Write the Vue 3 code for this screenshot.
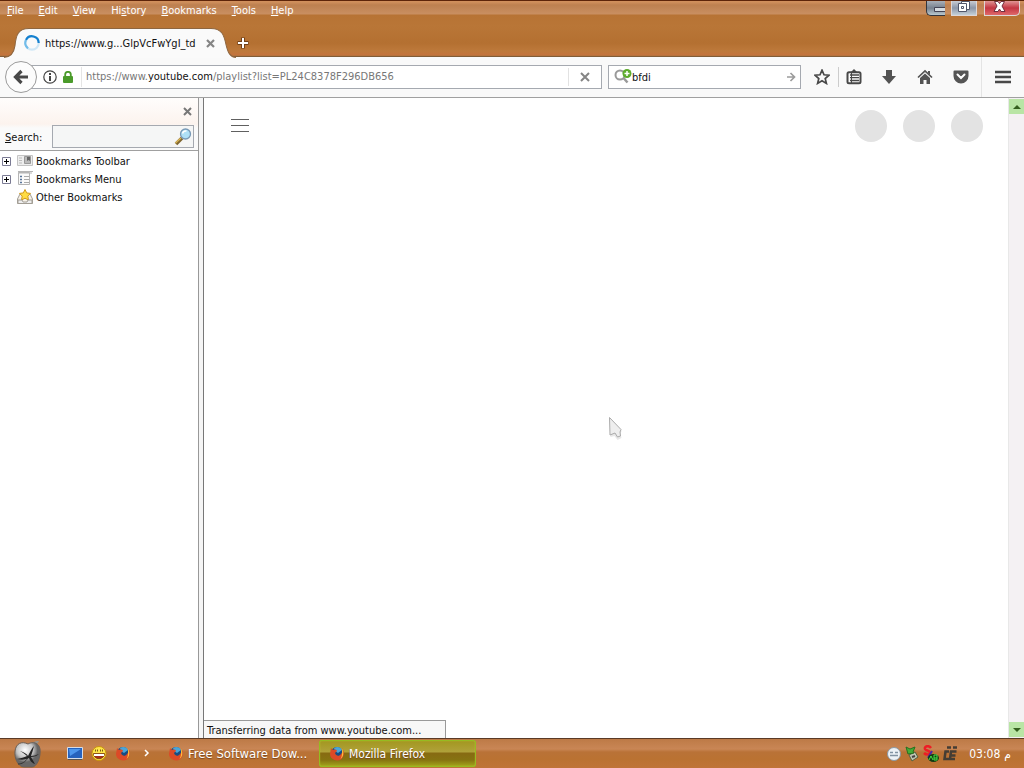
<script setup>
import { ref } from 'vue'

const menus = ['File', 'Edit', 'View', 'History', 'Bookmarks', 'Tools', 'Help']
const menuKey = { File: 0, Edit: 0, View: 0, History: 2, Bookmarks: 0, Tools: 0, Help: 0 }
const query = ref('bfdi')
const filter = ref('')
</script>

<template>
  <div class="desktop">
    <header class="titlebar">
      <nav class="menus">
        <button v-for="m in menus" :key="m" class="menu">{{ m.slice(0, menuKey[m]) }}<u>{{ m[menuKey[m]] }}</u>{{ m.slice(menuKey[m] + 1) }}</button>
      </nav>
      <div class="window-buttons">
        <button class="wb min" aria-label="Minimize">
          <svg width="18" height="15" viewBox="0 0 18 15"><path d="M18 6.500H7.500v4H18" fill="#d5dbe0" stroke="#445" /></svg>
        </button>
        <button class="wb max" aria-label="Restore">
          <svg width="24" height="15" viewBox="0 0 24 15"><g fill="#fff" stroke="#50566a"><path d="M9.500.5h8v8h-8z" /><path d="M6.500 2.500h8v8h-8z" /><path d="M9.500 5.500h2v2h-2z" /></g></svg>
        </button>
        <button class="wb close" aria-label="Close">
          <svg width="34" height="15" viewBox="0 0 34 15"><path d="M9.500.5h3.500l1.500 2 1.500-2h3.500l-2.500 4.500 3 5.500h-4l-1.500-2.500-1.500 2.500h-4l3-5.500z" fill="#fff" stroke="#703040" /></svg>
        </button>
      </div>
      <div class="tabs">
        <div class="tab">
          <svg class="tab-shape" viewBox="0 0 232 29" preserveAspectRatio="none"><path d="M0 29C7 28 10 24 11 17C12 7 14 .5 25 .5H207C218 .5 220 7 222 16C224 24 226 28 232 29Z" fill="#fafafa" /><path d="M0 28.500C7 28 10 24 11 17C12 7 14 .5 25 .5H207C218 .5 220 7 222 16C224 24 226 28 232 28.500" fill="none" stroke="#8e663f" /></svg>
          <svg class="spinner" width="16" height="16" viewBox="0 0 16 16" fill="none" stroke-width="2.200"><circle cx="8" cy="8" r="6.700" stroke="#cfe7f6" /><path d="M2 5A6.700 6.700 0 0 1 14.700 8" stroke="#1580cf" /><path d="M2 5A6.700 6.700 0 0 0 4 13.400" stroke="#72bce9" /></svg>
          <span class="tab-title">https://www.g...GlpVcFwYgI_td</span>
          <button class="x" aria-label="Close tab"><svg width="9" height="9" viewBox="0 0 9 9"><path d="M1 1l7 7M8 1L1 8" stroke="#858585" stroke-width="2.200" /></svg></button>
        </div>
        <button class="new-tab" aria-label="New tab"><svg width="12" height="12" viewBox="0 0 12 12"><path d="M6 .5v11M.5 6h11" stroke="#704018" stroke-width="4" /><path d="M6 1v10M1 6h10" stroke="#fff" stroke-width="2" /></svg></button>
      </div>
    </header>

    <div class="navbar">
      <button class="back" aria-label="Back"><svg width="16" height="16" viewBox="0 0 16 16"><path d="M8.500 2L2.500 8l6 6M3 8h12" fill="none" stroke="#484848" stroke-width="3.200" /></svg></button>
      <div class="urlbar">
        <svg width="14" height="14" viewBox="0 0 14 14"><circle cx="7" cy="7" r="6.200" fill="none" stroke="#444" stroke-width="1.200" /><path d="M7 3v2M7 6v5" stroke="#444" stroke-width="2" /></svg>
        <svg class="lock" width="10" height="12" viewBox="0 0 10 12"><path d="M2.200 6V3.600a2.800 2.800 0 0 1 5.600 0V6" fill="none" stroke="#4b9b2b" stroke-width="1.800" /><rect y="5" width="10" height="7" rx="1" fill="#4b9b2b" /></svg>
        <a class="url" href="#">https://www.<b>youtube.com</b>/playlist?list=PL24C8378F296DB656</a>
        <button class="stop" aria-label="Stop"><svg width="10" height="10" viewBox="0 0 10 10"><path d="M1 1l8 8M9 1L1 9" stroke="#858585" stroke-width="2" /></svg></button>
      </div>
      <label class="searchbar">
        <svg width="18" height="16" viewBox="0 0 18 16"><path d="M9.500 9l4 4.500" stroke="#999" stroke-width="2.500" /><circle cx="6" cy="6" r="4.500" fill="none" stroke="#999" stroke-width="2" /><circle cx="13" cy="4.500" r="4.500" fill="#5dab2c" /><path d="M13 2v5M10.500 4.500h5" stroke="#fff" stroke-width="1.500" /></svg>
        <input v-model="query" aria-label="Search the web">
        <svg width="10" height="10" viewBox="0 0 10 10"><path d="M1 5h7M4.500 1l4 4-4 4" fill="none" stroke="#9c9c9c" stroke-width="1.700" /></svg>
      </label>
      <div class="tools">
        <button aria-label="Bookmark"><svg width="16" height="16" viewBox="0 0 16 16"><path d="M8 1.200l2 4.600 5 .4-3.800 3.300 1.200 4.900L8 11.800l-4.400 2.600 1.200-4.900L1 6.200l5-.4z" fill="none" stroke="#484848" stroke-width="1.700" /></svg></button>
        <button class="ruled" aria-label="Show bookmarks"><svg width="16" height="16" viewBox="0 0 16 16"><path d="M5 3l3-3 3 3z" fill="#484848" /><rect x="1.500" y="3.200" width="13" height="11" rx="1.500" fill="#fafafa" stroke="#484848" stroke-width="2" /><path d="M4 6h9M4 8.700h9M4 11.500h9" stroke="#484848" stroke-width="1.300" /><path d="M5.500 4v10" stroke="#484848" /></svg></button>
        <button aria-label="Downloads"><svg width="16" height="16" viewBox="0 0 16 16"><path d="M5 1h6v6h4l-7 8-7-8h4z" fill="#535353" /></svg></button>
        <button aria-label="Home"><svg width="16" height="16" viewBox="0 0 16 16"><path d="M1 8.500L8 2l7 6.500" fill="none" stroke="#535353" stroke-width="1.700" /><path d="M11 2h2v4l-2-2zM3 9l5-4.500L13 9v6H9.500v-4h-3v4H3z" fill="#535353" /></svg></button>
        <button aria-label="Save to Pocket"><svg width="16" height="16" viewBox="0 0 16 16"><path d="M1.500 1.500h13a1 1 0 0 1 1 1V7a7.500 7.500 0 0 1-15 0V2.500a1 1 0 0 1 1-1z" fill="#555" /><path d="M4.500 5.500L8 9l3.500-3.500" fill="none" stroke="#fff" stroke-width="2" stroke-linecap="round" /></svg></button>
        <button class="hamburger" aria-label="Open menu"><svg width="16" height="14" viewBox="0 0 16 14"><path d="M0 2h16M0 7h16M0 12h16" stroke="#484848" stroke-width="2.600" /></svg></button>
      </div>
    </div>

    <div class="body">
      <aside class="sidebar">
        <div class="side-head">
          <button class="x" aria-label="Close sidebar"><svg width="9" height="9" viewBox="0 0 9 9"><path d="M1 1l7 7M8 1L1 8" stroke="#777" stroke-width="2" /></svg></button>
          <div class="side-search">
            <label for="filter"><u>S</u>earch:</label>
            <div class="filter">
              <input id="filter" v-model="filter">
              <svg width="18" height="18" viewBox="0 0 18 18"><path d="M8 10l-6 6" stroke="#806730" stroke-width="3.500" /><path d="M7 10l-5.500 5" stroke="#d7b458" stroke-width="1.500" /><circle cx="11.500" cy="6" r="5" fill="#aee0f7" stroke="#7898b5" stroke-width="1.300" /><path d="M8.500 5.500a3.500 3.500 0 0 1 4-2.500" fill="none" stroke="#fff" stroke-width="1.500" /></svg>
            </div>
          </div>
        </div>
        <ul class="tree">
          <li>
            <svg class="plus" width="9" height="9" viewBox="0 0 9 9"><path d="M.5.5h8v8h-8z" fill="#fff" stroke="#7b7b94" /><path d="M2 4.500h5M4.500 2v5" stroke="#000" /></svg>
            <svg width="16" height="16" viewBox="0 0 16 16"><path d="M.5 2.500h15v10H.5z" fill="#eee" stroke="#c4c4c4" /><path d="M2 5h3M2 7.500h3M2 10h3" stroke="#bbb" /><path d="M7.500 3.500h6v7h-6z" fill="#bbb" stroke="#999" /><path d="M10 4v4l1.500-1L13 8V4z" fill="#666" /></svg>
            <span>Bookmarks Toolbar</span>
          </li>
          <li>
            <svg class="plus" width="9" height="9" viewBox="0 0 9 9"><path d="M.5.5h8v8h-8z" fill="#fff" stroke="#7b7b94" /><path d="M2 4.500h5M4.500 2v5" stroke="#000" /></svg>
            <svg width="16" height="16" viewBox="0 0 16 16"><path d="M1.500 1.500h11v12h-11z" fill="#fafafa" stroke="#b5b5b5" /><path d="M1 .5h15M1 2h14" stroke="#b5b5b5" /><path d="M3 5.500h2M3 8.500h2M3 11.500h2" stroke="#58759a" stroke-width="1.500" /><path d="M7 5.500h5M7 8.500h5M7 11.500h5" stroke="#aaa" /></svg>
            <span>Bookmarks Menu</span>
          </li>
          <li>
            <i class="plus"></i>
            <svg width="16" height="16" viewBox="0 0 16 16"><path d="M3 5h10l2.500 5v4.500H.5V10z" fill="#f7f2e8" stroke="#a39e95" /><path d="M8 .5l1.700 3.400 3.800.5-2.700 2.700.7 3.900L8 9.200 4.500 11l.7-3.900-2.700-2.700 3.800-.5z" fill="#ffdc43" stroke="#d39b1c" /><path d="M1 11h4l1 2h4l1-2h4v3.500H1z" fill="#eee" stroke="#a39e95" /></svg>
            <span>Other Bookmarks</span>
          </li>
        </ul>
      </aside>
      <div class="splitter"></div>
      <main class="page">
        <div class="page-head">
          <button class="guide" aria-label="Guide"><svg width="18" height="14" viewBox="0 0 18 14"><path d="M0 .5h18M0 6.500h18M0 12.500h18" stroke="#606060" /></svg></button>
          <div class="dots"><i></i><i></i><i></i></div>
        </div>
        <div class="status">Transferring data from www.youtube.com...</div>
      </main>
      <div class="scrollbar">
        <button aria-label="Scroll up"><svg width="8" height="4" viewBox="0 0 8 4"><path d="M0 4l4-4 4 4z" fill="#35601f" /></svg></button>
        <button aria-label="Scroll down"><svg width="8" height="4" viewBox="0 0 8 4"><path d="M0 0h8L4 4z" fill="#35601f" /></svg></button>
      </div>
    </div>

    <footer class="taskbar">
      <button class="start" aria-label="Start">
        <svg width="28" height="28" viewBox="0 0 28 28"><defs><radialGradient id="orb" cx=".4" cy=".3"><stop offset="0" stop-color="#fff" /><stop offset=".65" stop-color="#c4c4c4" /><stop offset="1" stop-color="#666" /></radialGradient></defs><path d="M15 6C17 3 20 1 25 1c-1 3-4 5-9 6z" fill="#999389" /><path d="M14 4c5-3 11-1 12 5 1 8-3 18-8 18h-8C4 27 0 18 1 11 2 3 8 1 14 4z" fill="url(#orb)" stroke="#6c6159" /><path d="M6 11c4 1 7 3 8 5 2-4 4-8 6-10-1 4-2 7-3 10 3 0 5-1 8-2-2 2-5 3-8 3l4 7c-3-1-5-3-6-6-4 2-8 2-12 1 5-1 8-2 10-3-2-2-4-3-7-5z" fill="#242424" /><path d="M4 24c4 0 7-2 10-6" fill="none" stroke="#333" /></svg>
      </button>
      <div class="quick">
        <button aria-label="Show desktop"><svg width="16" height="16" viewBox="0 0 16 16"><path d="M.5 1.500h15v11H.5z" fill="#2662bd" stroke="#d7dce5" /><path d="M2 3h12L3 10z" fill="#4d96ec" /><path d="M1 13.500h14" stroke="#555" /></svg></button>
        <button aria-label="Messenger"><svg width="16" height="16" viewBox="0 0 16 16"><circle cx="8" cy="7.500" r="7" fill="#ffe54a" stroke="#c8940d" /><path d="M2.500 7.500h11c0 7-11 7-11 0z" fill="#a5301a" stroke="#733c0b" stroke-width=".7" /><path d="M3 8h10v2H3z" fill="#fff" /><path d="M4.500 5.500v-2M6.500 5.500v-2M9.500 5.500v-2M11.500 5.500v-2" stroke="#7a5a14" /></svg></button>
        <button aria-label="Firefox"><svg width="16" height="16" viewBox="0 0 16 16"><use href="#fox" /></svg></button>
        <button aria-label="More"><svg width="16" height="16" viewBox="0 0 16 16"><path d="M6 4l3 3-3 3" fill="none" stroke="#fff" stroke-width="1.500" /></svg></button>
      </div>
      <button class="task">
        <svg width="16" height="16" viewBox="0 0 16 16"><g id="fox"><circle cx="8" cy="7" r="6" fill="#174c82" /><path d="M5 2c3-2 7-1 8 2L9 7 6 5z" fill="#4aa5d8" /><path d="M2 2l2 2c2-1 4 0 4 1L6 7c1 3 4 4 6 1 2-2 2-4 1-6 3 4 2 9-1 11.500C7 16 1 13 1 8z" fill="#dc4a27" /><path d="M12.500 2c3 4 2 9-1 11 2-4 2-7 1-11z" fill="#ffc13b" /></g></svg>
        <span>Free Software Dow...</span>
      </button>
      <button class="task active">
        <svg width="16" height="16" viewBox="0 0 16 16"><use href="#fox" /></svg>
        <span>Mozilla Firefox</span>
      </button>
      <div class="tray">
        <svg width="14" height="14" viewBox="0 0 14 14"><circle cx="7" cy="7" r="6.500" fill="#edf2f6" stroke="#8a98a4" /><path d="M3 5.500h3M8 5.500h3M3 8.500h8" stroke="#8193a2" stroke-width="1.300" /></svg>
        <svg width="16" height="16" viewBox="0 0 16 16"><path d="M5 9l6-3 3 5-6 4z" fill="#bec5b1" stroke="#53613e" /><path d="M2 1l4 2 5-2-2 5 1 1-6 1z" fill="#45ac35" stroke="#267020" /><path d="M8 11l3-1" stroke="#444" stroke-width="2" /></svg>
        <svg width="16" height="18" viewBox="0 0 16 18"><path d="M8 3C6 0 1 1 2 4c1 2 5 1 5 4 0 2-4 2-6 0" fill="none" stroke="#ee1d25" stroke-width="2.500" /><path d="M9 6L5 13" stroke="#4828a5" stroke-width="2" /><ellipse cx="10.500" cy="13" rx="5.500" ry="4" fill="#123b12" /><path d="M6 15l2-4 2 4M11 10v5h3v-2h-3m0-3h3v3" fill="none" stroke="#46e246" /></svg>
        <svg width="16" height="16" viewBox="0 0 16 16"><path d="M5 1.500h4M11 1.500h4" stroke="#443d34" stroke-width="2.500" /><path d="M7 5.500H3.500L2.500 13h5.500l1-7.500h5.500M9 9.500h4.500M8 13h5" fill="none" stroke="#443d34" stroke-width="2.500" /></svg>
        <time dir="ltr"><span>03:08</span><span lang="ar">م</span></time>
      </div>
    </footer>

    <svg class="cursor" width="16" height="24" viewBox="0 0 16 24"><path d="M1.500 2l11 12-1 3 1 4-4 2-3-4-4 1z" fill="#bbb" opacity=".35" /><path d="M.5.5l11.500 12-1 2.500.5 4-3 1-2.500-4-5 2z" fill="#eee" stroke="#aaa" /></svg>
  </div>
</template>

<style>
body { margin: 0; }
</style>

<style scoped>
* { box-sizing: border-box; }
.desktop { position: relative; display: flex; flex-direction: column; min-height: 100vh; overflow: hidden; background: #fff; color: #111; font: 11px/14px "DejaVu Sans Condensed", "Open Sans", sans-serif; }
button { display: flex; align-items: center; justify-content: center; padding: 0; border: 0; background: none; color: inherit; font: inherit; }
input { min-width: 0; flex: 1; padding: 0; border: 0; outline: 0; background: none; color: inherit; font: inherit; }
svg { flex: none; display: block; }

.titlebar { position: relative; height: 57px; border-top: 1px solid #5d2409; border-bottom: 1px solid #815c38; background: linear-gradient(#d08f5c 0 1px, #bd8050 4px, #c98f61 13px, #b77334 14px, #b97637 25px, #b47031 42px, #bd793b 50px, #c4733d 54px, #a8733e); display: flex; flex-direction: column; justify-content: space-between; }
.menus { display: flex; gap: 15px; padding: 3px 7px 0; color: #fff; text-shadow: 0 1px 1px #754821; }
.menu { display: block; white-space: nowrap; }
.window-buttons { position: absolute; top: 0; right: 4px; display: flex; align-items: flex-start; }
.wb { height: 15px; border: 1px solid #ded7d8; border-top: 0; }
.wb.min { width: 19px; margin-right: 6px; border-color: #33353d; border-right: 0; border-radius: 0 0 0 5px; background: linear-gradient(#a9b0b9, #77818e 50%, #b9c8cf); }
.wb.max { width: 26px; margin-right: 7px; background: linear-gradient(#c8ccd4, #8c96a8 50%, #c4d0d8); }
.wb.close { width: 36px; border-radius: 0 0 5px 0; background: linear-gradient(#e19594, #c43642 50%, #df696b); }
.tabs { display: flex; height: 28px; align-items: center; padding-left: 4px; margin-bottom: -1px; }
.tab { position: relative; display: flex; align-items: center; width: 232px; height: 30px; padding: 0 21px 0 20px; gap: 5px; }
.tab-shape { position: absolute; inset: 0; width: 100%; height: 100%; }
.spinner, .tab-title, .tab .x { position: relative; }
.tab-title { flex: 1; white-space: nowrap; padding-top: 2px; }
.new-tab { width: 14px; height: 14px; }

.navbar { display: flex; align-items: center; height: 41px; padding-left: 5px; border-bottom: 1px solid #a0a0a0; background: #f9f9f9; }
.back { position: relative; z-index: 1; width: 32px; height: 32px; border: 1px solid #9b9b9b; border-radius: 50%; background: #fcfcfc; }
.urlbar { flex: 1; display: flex; align-items: center; height: 24px; margin-left: -6px; padding-left: 11px; border: 1px solid #a5a9b0; background: #fff; }
.lock { margin: 0 8px 0 6px; }
.url { flex: 1; min-width: 0; overflow: hidden; padding: 2px 0 2px 4px; border-left: 1px solid #e5e5e5; color: #777; text-decoration: none; white-space: nowrap; line-height: 16px; }
.url b { font-weight: 400; color: #111; }
.stop { width: 33px; height: 18px; border-left: 1px solid #e2e2e2; }
.searchbar { display: flex; align-items: center; width: 193px; height: 24px; margin-left: 6px; padding: 0 4px 0 5px; border: 1px solid #a5a9b0; background: #fff; }
.searchbar input { padding-top: 2px; }
.tools { display: flex; align-items: center; height: 40px; padding-left: 5px; }
.tools button { width: 36px; height: 20px; }
.tools button:first-child { width: 32px; }
.tools .ruled { width: 30px; border-left: 1px solid #ccc; margin-right: 3px; }
.tools .hamburger { width: 43px; height: 40px; margin-left: 2px; padding-right: 1px; border-left: 1px solid #e4e4e4; }

.body { display: flex; flex: 1; }
.sidebar { width: 199px; border-right: 1px solid #999; background: #fff; }
.side-head { display: flex; flex-direction: column; height: 53px; padding: 8px 4px 2px 5px; border-bottom: 1px solid #a0a0a0; background: linear-gradient(#fffdfc, #fcf3ee 26px, #fafafa 30px); }
.side-head .x { align-self: flex-end; height: 10px; width: 13px; }
.side-search { display: flex; align-items: center; gap: 10px; margin-top: 9px; }
.side-search label { padding-top: 2px; }
.filter { display: flex; flex: 1; min-width: 0; align-items: center; height: 23px; padding: 0 1px; border: 1px solid #a5a9b0; background: #f5f6f6; }
.tree { margin: 0; padding: 1px 2px; list-style: none; }
.tree li { display: flex; align-items: center; height: 18px; }
.plus { width: 9px; margin-right: 6px; }
.tree span { margin-left: 3px; padding-top: 2px; white-space: nowrap; }
.splitter { width: 5px; border-right: 1px solid #777; background: #f5f5f5; }
.page { flex: 1; display: flex; flex-direction: column; justify-content: space-between; align-items: flex-start; background: #fff; }
.page-head { display: flex; align-items: center; justify-content: space-between; align-self: stretch; height: 56px; padding: 0 25px 0 27px; }
.dots { display: flex; gap: 16px; }
.dots i { width: 32px; height: 32px; border-radius: 50%; background: #e3e3e3; }
.status { width: 242px; height: 18px; padding: 3px 3px 0; border: 1px solid #999; border-left: 0; border-bottom: 0; background: #f7f7f7; white-space: nowrap; }
.scrollbar { display: flex; flex-direction: column; justify-content: space-between; width: 16px; padding: 1px 0; border-left: 1px solid #e8e8e8; background: #f4f1f3; }
.scrollbar button { height: 15px; background: #b9e5a5; }

.taskbar { display: flex; align-items: center; height: 30px; padding: 0 13px 0 14px; border-top: 1px solid #5a3a26; background: linear-gradient(#bd7a46, #c98655 10px, #b97237 13px, #ba7232 20px, #c07438); color: #fff; font-size: 12px; }
.start { width: 28px; height: 28px; margin-right: 25px; }
.quick { display: flex; gap: 8px; margin-right: 13px; }
.task { justify-content: flex-start; width: 151px; height: 27px; gap: 4px; font-size: 13px; white-space: nowrap; text-shadow: 0 1px 1px #76451f; }
.task.active { width: 157px; padding-left: 9px; border: 1px solid #96bb21; border-radius: 2px; background: linear-gradient(#a39721, #b0a23a 11px, #876a12 12px, #867411 19px, #a1a31b); box-shadow: inset 0 0 1px #c6e23b; font-size: 12px; }
.tray { display: flex; align-items: center; gap: 3px; margin-left: auto; }
.tray time { display: flex; gap: 4px; margin-left: 8px; }
.cursor { position: absolute; left: 609px; top: 417px; }
</style>
